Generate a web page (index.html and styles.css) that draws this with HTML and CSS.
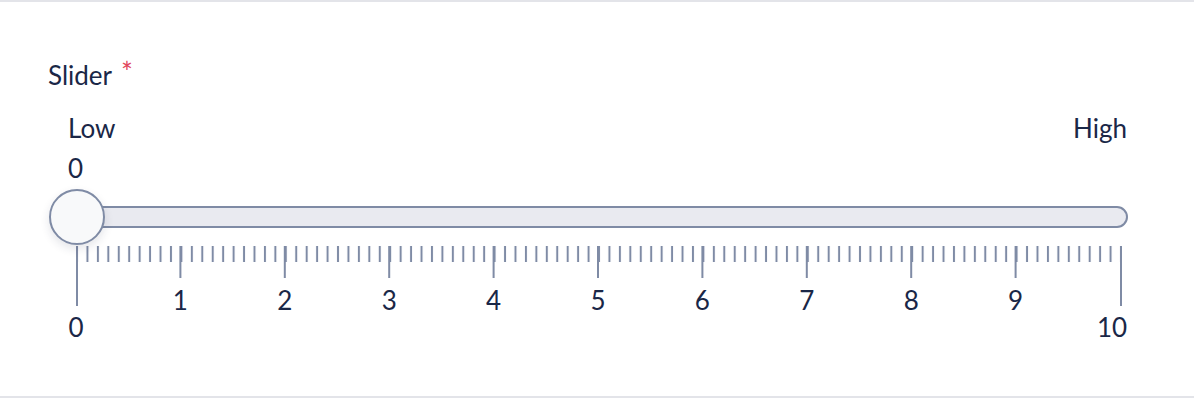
FILE: index.html
```html
<!DOCTYPE html>
<html lang="en">
<head>
<meta charset="utf-8">
<title>Slider</title>
<link rel="stylesheet" href="styles.css">
</head>
<body>
<section class="field">
  <div class="field-label">Slider<span class="required">*</span></div>
  <div class="range-ends">
    <span>Low</span>
    <span>High</span>
  </div>
  <div class="range-value">0</div>
  <div class="range-track-wrap">
    <div class="range-track"></div>
    <div class="range-thumb"></div>
  </div>
  <svg class="range-scale" width="1194" height="100" viewBox="0 0 1194 100">
    <defs>
      <pattern id="minor" patternUnits="userSpaceOnUse" x="77" y="1" width="10.44" height="16">
        <rect x="-1" y="0" width="2" height="16" class="tick"/>
        <rect x="9.44" y="0" width="2" height="16" class="tick"/>
      </pattern>
    </defs>
    <rect x="76" y="1" width="1046" height="16" fill="url(#minor)"/>
    <g class="major">
      <rect x="76" y="1" width="2" height="60"/>
      <rect x="179.4" y="1" width="2" height="32"/>
      <rect x="283.8" y="1" width="2" height="32"/>
      <rect x="388.2" y="1" width="2" height="32"/>
      <rect x="492.6" y="1" width="2" height="32"/>
      <rect x="597" y="1" width="2" height="32"/>
      <rect x="701.4" y="1" width="2" height="32"/>
      <rect x="805.8" y="1" width="2" height="32"/>
      <rect x="910.2" y="1" width="2" height="32"/>
      <rect x="1014.6" y="1" width="2" height="32"/>
      <rect x="1120" y="1" width="2" height="60"/>
    </g>
    <g class="scale-labels">
      <text x="76" y="92">0</text>
      <text x="180.4" y="65">1</text>
      <text x="284.8" y="65">2</text>
      <text x="389.2" y="65">3</text>
      <text x="493.6" y="65">4</text>
      <text x="598" y="65">5</text>
      <text x="702.4" y="65">6</text>
      <text x="806.8" y="65">7</text>
      <text x="911.2" y="65">8</text>
      <text x="1015.6" y="65">9</text>
      <text x="1112" y="92">10</text>
    </g>
  </svg>
</section>
</body>
</html>
```

FILE: styles.css
```css
html, body {
  margin: 0;
  padding: 0;
  background: #ffffff;
}

body {
  font-family: Lato, "Open Sans", sans-serif;
  color: #1a2747;
}

.field {
  box-sizing: border-box;
  height: 398px;
  border-top: 2px solid #e3e4e9;
  border-bottom: 2px solid #e3e4e9;
  padding-top: 58px;
  display: flex;
  flex-direction: column;
}

.field-label {
  font-size: 26px;
  line-height: 31px;
  padding-left: 48px;
}

.required {
  color: #e1475b;
  font-size: 28px;
  vertical-align: top;
  line-height: 24px;
  margin-left: 9px;
}

.range-ends {
  margin-top: 22px;
  display: flex;
  justify-content: space-between;
  padding: 0 67px 0 68px;
  font-size: 26px;
  line-height: 31px;
}

.range-value {
  margin-top: 9px;
  padding-left: 68px;
  font-size: 26px;
  line-height: 31px;
}

.range-track-wrap {
  position: relative;
  margin: 5px 66px 0 49px;
  height: 56px;
  display: flex;
  align-items: center;
}

.range-track {
  flex: 1;
  margin-left: 20px;
  height: 18px;
  border: 2px solid #7f8ba5;
  border-radius: 11px;
  background: #e9eaf0;
}

.range-thumb {
  position: absolute;
  left: 0;
  top: 0;
  box-sizing: border-box;
  width: 56px;
  height: 56px;
  border-radius: 50%;
  border: 2px solid #7f8ba5;
  background: #f8f9fa;
  box-shadow: 0 4px 10px rgba(30, 40, 70, 0.12);
}

.range-scale {
  display: block;
  margin-top: 0;
}

.tick,
.major rect {
  fill: #7f8ba5;
}

.scale-labels text {
  font-family: Lato, "Open Sans", sans-serif;
  font-size: 26px;
  fill: #1a2747;
  text-anchor: middle;
}
```
